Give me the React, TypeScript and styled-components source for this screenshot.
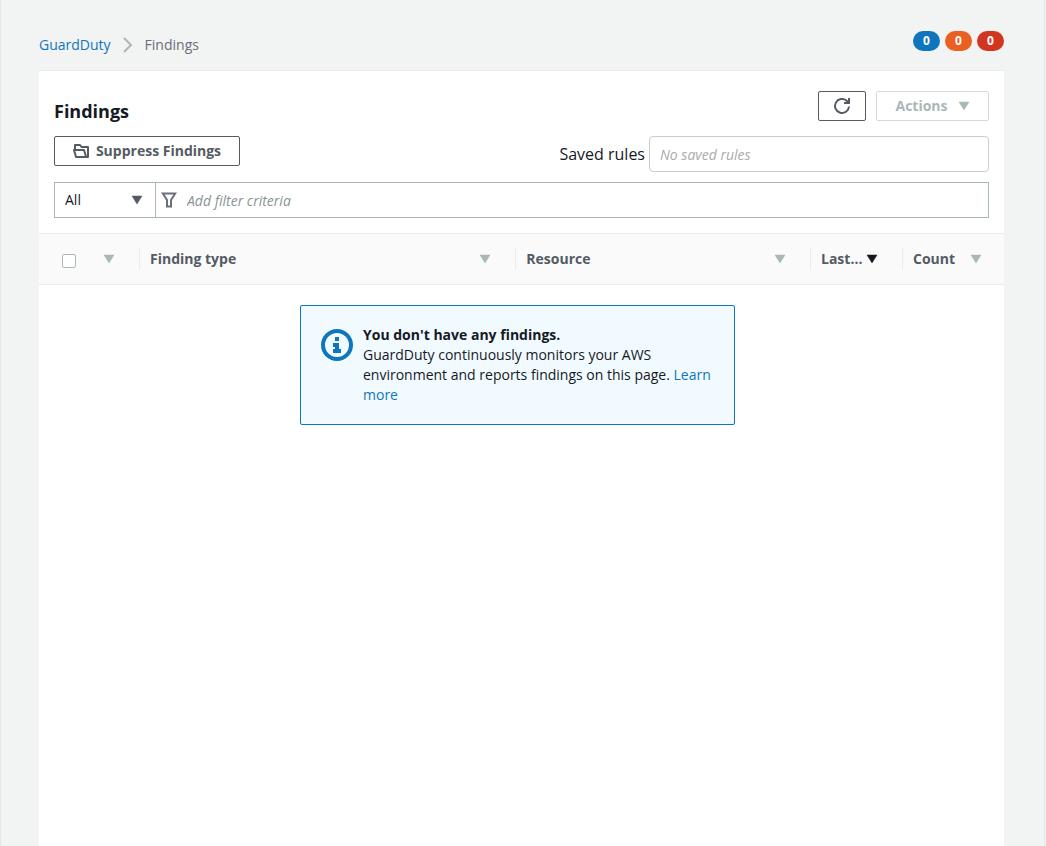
import React from "react";
import styled, { createGlobalStyle } from "styled-components";

const GlobalStyle = createGlobalStyle`
  *, *::before, *::after { box-sizing: border-box; }
  body {
    margin: 0;
    background: #f2f3f3;
    color: #16191f;
    font: 14px/20px "Open Sans", "Noto Sans", sans-serif;
  }
  button, input, select { font: inherit; color: inherit; margin: 0; }
`;

const Page = styled.main`
  display: flex;
  flex-direction: column;
  min-height: 100vh;
  margin-right: 1px;
  padding: 30px 40px 0 38px;
  border: solid #e6e9e9;
  border-width: 0 1px;
`;

const TopBar = styled.header`
  display: flex;
  justify-content: space-between;
  height: 40px;
`;

const Crumbs = styled.nav`
  display: flex;
  align-items: center;
  gap: 12px;
  height: 30px;
  color: #687078;
`;

const Link = styled.a`
  color: #0f76bd;
  text-decoration: none;
`;

const Badges = styled.div`
  display: flex;
  gap: 5px;
  padding-top: 1px;
`;

const Badge = styled.span<{ $color: string }>`
  width: 27px;
  height: 20px;
  border-radius: 10px;
  background: ${(p) => p.$color};
  color: #fff;
  font-size: 12px;
  font-weight: 700;
  text-align: center;
`;

const Panel = styled.section`
  flex: 1;
  border-top: 1px solid #eaeded;
  background: #fff;
`;

const Tools = styled.div`
  padding: 20px 15px 15px;
`;

const TitleRow = styled.div`
  display: flex;
  align-items: flex-start;
  gap: 10px;
  margin-bottom: 15px;
`;

const TitleBox = styled.div`
  flex: 1;
  height: 30px;
`;

const Title = styled.h1`
  margin: 0;
  font-size: 18px;
  line-height: 40px;
`;

const Button = styled.button<{ $width: number }>`
  display: inline-flex;
  align-items: center;
  justify-content: center;
  gap: 6px;
  width: ${(p) => p.$width}px;
  height: 30px;
  padding: 0;
  border: 1px solid #545b64;
  border-radius: 2px;
  background: #fff;
  color: #545b64;
  font-weight: 700;
  &:disabled {
    gap: 10px;
    border-color: #d5dbdb;
    color: #aab7b8;
  }
`;

const RulesRow = styled.div`
  display: flex;
  justify-content: space-between;
  align-items: flex-start;
  margin-bottom: 10px;
`;

const SavedRules = styled.label`
  display: flex;
  align-items: center;
  gap: 4px;
  font-size: 16px;
`;

const SavedInput = styled.input`
  width: 340px;
  height: 36px;
  padding: 0 10px;
  border: 1px solid #ccc;
  border-radius: 4px;
  background: #fff;
  font-size: 14px;
  font-style: italic;
  &::placeholder { color: #aaa; opacity: 1; }
`;

const FilterBar = styled.div`
  display: flex;
  height: 36px;
  border: 1px solid #aab7b8;
  color: #545b64;
`;

const SelectBox = styled.div`
  display: grid;
  align-items: center;
  width: 101px;
  border-right: 1px solid #aab7b8;
  > * { grid-area: 1 / 1; }
  > svg { justify-self: end; margin-right: 12px; pointer-events: none; }
`;

const Select = styled.select`
  appearance: none;
  width: 100%;
  height: 34px;
  padding: 0 10px;
  border: 0;
  background: transparent;
  color: #16191f;
`;

const FilterField = styled.label`
  display: flex;
  flex: 1;
  align-items: center;
  gap: 10px;
  padding-left: 5px;
`;

const FilterInput = styled.input`
  flex: 1;
  height: 34px;
  padding: 0;
  border: 0;
  outline: 0;
  background: transparent;
  font-style: italic;
  &::placeholder { color: #879596; opacity: 1; }
`;

const Table = styled.table`
  width: 100%;
  border-spacing: 0;
  table-layout: fixed;
`;

const Th = styled.th<{ $width?: string }>`
  width: ${(p) => p.$width ?? "auto"};
  height: 52px;
  padding: 0;
  border: solid #eaeded;
  border-width: 1px 0;
  background: #fafafa;
  color: #545b64;
  text-align: left;
`;

const HeadCell = styled.div<{ $first?: boolean; $last?: boolean }>`
  display: flex;
  align-items: center;
  justify-content: space-between;
  height: 22px;
  padding: 0 ${(p) => (p.$last ? 22 : 24)}px 0 ${(p) => (p.$first ? 23 : 10)}px;
  border-left: ${(p) => (p.$first ? 0 : 1)}px solid #eaeded;
  white-space: nowrap;
`;

const SortButton = styled.button<{ $active?: boolean }>`
  display: flex;
  padding: 0;
  border: 0;
  background: none;
  color: ${(p) => (p.$active ? "#16191f" : "#aab7b8")};
`;

const Checkbox = styled.input`
  appearance: none;
  width: 14px;
  height: 14px;
  border: 1px solid #aab7b8;
  border-radius: 2px;
  background: #fff;
  && { margin-top: 3px; }
`;

const EmptyCell = styled.td`
  padding: 20px 8px 20px 0;
`;

const Notice = styled.div`
  display: flex;
  gap: 10px;
  max-width: 435px;
  margin: 0 auto;
  padding: 19px 20px;
  border: 1px solid #0f76bd;
  border-radius: 2px;
  background: #f1faff;
  > svg { flex: none; margin-top: 4px; }
`;

const NoticeText = styled.p`
  margin: 0;
`;

const NoticeTitle = styled.strong`
  display: block;
`;

const Caret = () => (
  <svg width="12" height="10" viewBox="0 0 12 10" aria-hidden="true">
    <path d="M1 1H11L6 9Z" fill="currentColor" stroke="currentColor" strokeWidth="0.5" />
  </svg>
);

const Chevron = () => (
  <svg width="10" height="16" viewBox="0 0 10 16" fill="none" stroke="#aab7b8" strokeWidth="2" aria-hidden="true">
    <path d="M1 1L8 8L1 15" />
  </svg>
);

const FolderIcon = () => (
  <svg width="17" height="14" viewBox="0 0 17 14" fill="none" stroke="currentColor" strokeWidth="2" strokeLinejoin="round" aria-hidden="true">
    <path d="M2 6V1H7L8.5 3H15V13H3L1 6H11L13 12.5" />
  </svg>
);

const RefreshIcon = () => (
  <svg width="18" height="18" viewBox="0 0 18 18" fill="none" stroke="currentColor" strokeWidth="2" aria-hidden="true">
    <path d="M16 9.5A7 7 0 1 1 13.6 3.7L16 6" />
    <path d="M16 1V6H11" />
  </svg>
);

const FunnelIcon = () => (
  <svg width="16" height="16" viewBox="0 0 16 16" fill="none" stroke="#687078" strokeWidth="2" aria-hidden="true">
    <path d="M1.8 1.5H14.2L10 8V14.5H6V8Z" />
  </svg>
);

const InfoIcon = () => (
  <svg width="32" height="32" viewBox="0 0 32 32" aria-hidden="true">
    <circle cx="16" cy="16" r="14" fill="#f1faff" stroke="#0f76bd" strokeWidth="4" />
    <path d="M14 8H18V12H14ZM12 14H18V20H20V24H12V20H14V18H12Z" fill="#0f76bd" />
  </svg>
);

const columns = [
  { label: "Finding type", width: "39%" },
  { label: "Resource" },
  { label: "Last...", width: "92px", active: true },
  { label: "Count", width: "102px" },
];

export default function App() {
  return (
    <>
      <GlobalStyle />
      <Page>
        <TopBar>
          <Crumbs aria-label="Breadcrumb">
            <Link href="#guardduty">GuardDuty</Link>
            <Chevron />
            <span>Findings</span>
          </Crumbs>
          <Badges>
            <Badge $color="#0f76bd">0</Badge>
            <Badge $color="#eb5f20">0</Badge>
            <Badge $color="#d13620">0</Badge>
          </Badges>
        </TopBar>
        <Panel>
          <Tools>
            <TitleRow>
              <TitleBox>
                <Title>Findings</Title>
              </TitleBox>
              <Button $width={48} aria-label="Refresh">
                <RefreshIcon />
              </Button>
              <Button $width={113} disabled>
                Actions
                <Caret />
              </Button>
            </TitleRow>
            <RulesRow>
              <Button $width={186}>
                <FolderIcon />
                Suppress Findings
              </Button>
              <SavedRules>
                Saved rules
                <SavedInput placeholder="No saved rules" />
              </SavedRules>
            </RulesRow>
            <FilterBar>
              <SelectBox>
                <Select aria-label="Finding status">
                  <option>All</option>
                </Select>
                <Caret />
              </SelectBox>
              <FilterField>
                <FunnelIcon />
                <FilterInput aria-label="Filter criteria" placeholder="Add filter criteria" />
              </FilterField>
            </FilterBar>
          </Tools>
          <Table>
            <thead>
              <tr>
                <Th $width="100px">
                  <HeadCell $first>
                    <Checkbox type="checkbox" aria-label="Select all findings" />
                    <SortButton aria-label="Sort by severity">
                      <Caret />
                    </SortButton>
                  </HeadCell>
                </Th>
                {columns.map((c, i) => (
                  <Th key={c.label} $width={c.width}>
                    <HeadCell $last={i === columns.length - 1}>
                      {c.label}
                      <SortButton $active={c.active} aria-label={`Sort by ${c.label}`}>
                        <Caret />
                      </SortButton>
                    </HeadCell>
                  </Th>
                ))}
              </tr>
            </thead>
            <tbody>
              <tr>
                <EmptyCell colSpan={5}>
                  <Notice>
                    <InfoIcon />
                    <NoticeText>
                      <NoticeTitle>You don't have any findings.</NoticeTitle>
                      GuardDuty continuously monitors your AWS environment and reports findings on this page.{" "}
                      <Link href="#learn">Learn more</Link>
                    </NoticeText>
                  </Notice>
                </EmptyCell>
              </tr>
            </tbody>
          </Table>
        </Panel>
      </Page>
    </>
  );
}
